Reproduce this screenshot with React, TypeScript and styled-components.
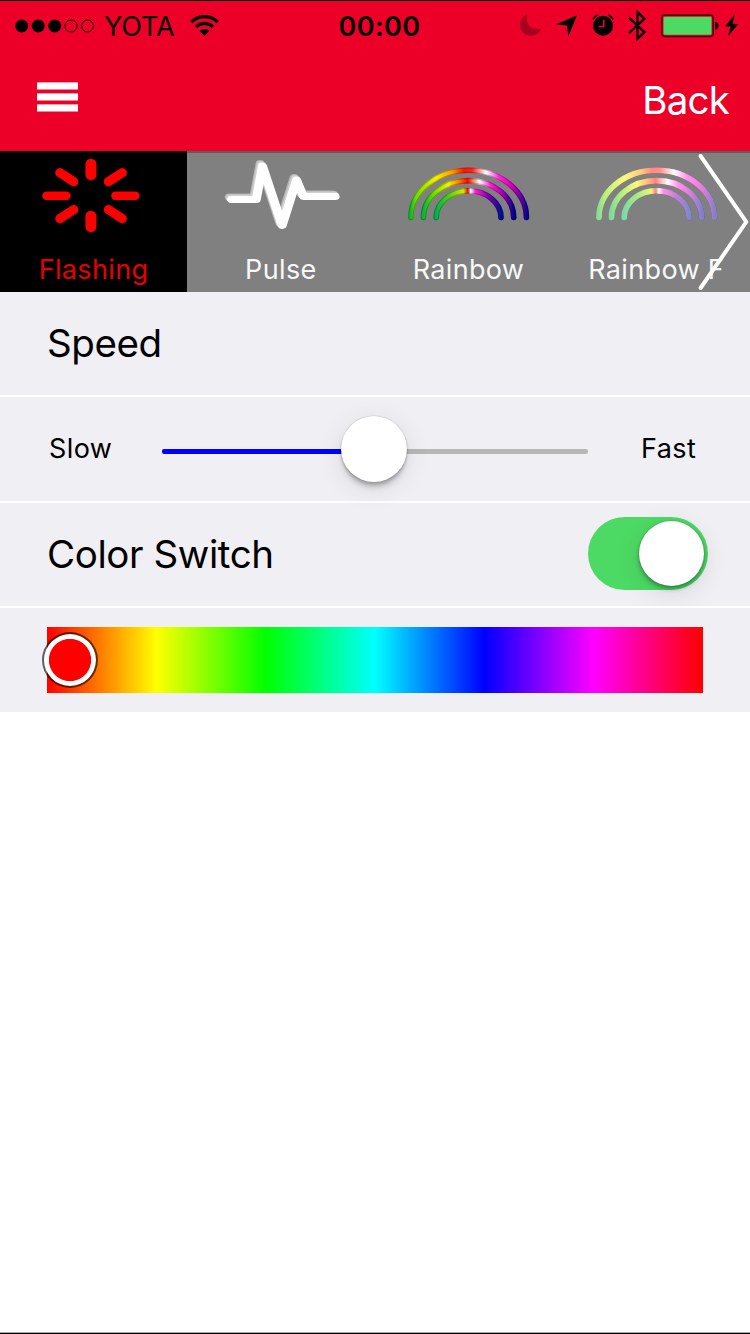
import React from "react";
import styled, { createGlobalStyle } from "styled-components";

const GlobalStyle = createGlobalStyle`
  * { box-sizing: border-box; }
  body { margin: 0; background: #fff; }
  svg { display: block; flex: none; }
`;

const Screen = styled.div`
  display: flex;
  flex-direction: column;
  width: 750px;
  height: 1334px;
  overflow: hidden;
  background: #fff;
  border-top: 1px solid #000;
  border-bottom: 1px solid #000;
  box-shadow: inset 0 -1px #aaa;
  font-family: Inter, "Liberation Sans", sans-serif;
`;

const Header = styled.header`
  height: 150px;
  flex: none;
  background: #ed0028;
`;

const StatusBar = styled.div`
  display: grid;
  grid-template-columns: 1fr auto 1fr;
  height: 49px;
  align-items: center;
`;

const StatusGroup = styled.div<{ $end?: boolean }>`
  display: flex;
  align-items: center;
  justify-content: ${(p) => (p.$end ? "flex-end" : "flex-start")};
  padding: ${(p) => (p.$end ? "0 11px 0 0" : "0 0 0 15px")};
`;

const Carrier = styled.span`
  font-size: 27px;
  line-height: 32px;
  margin: 2px 15px 0 9px;
  letter-spacing: -0.1px;
`;

const Clock = styled.span`
  font-size: 27px;
  line-height: 32px;
  font-weight: 600;
  letter-spacing: 0.4px;
  margin-top: 2px;
  margin-left: 9px;
`;

const NavBar = styled.nav`
  display: flex;
  justify-content: space-between;
  align-items: center;
  height: 100px;
  padding: 0 21px 0 37px;
`;

const MenuButton = styled.button`
  display: flex;
  flex-direction: column;
  gap: 3px;
  padding: 0;
  margin-bottom: 7px;
  border: 0;
  background: none;
`;

const MenuBar = styled.span`
  width: 41px;
  height: 8px;
  background: linear-gradient(#f9a0ac 0 1px, #fff 1px 7px, #f7808f 7px 8px);
`;

const BackButton = styled.button`
  padding: 0;
  border: 0;
  background: none;
  color: #fff;
  font: 400 38.5px/48px Inter, sans-serif;
  letter-spacing: -0.8px;
`;

const Tabs = styled.div`
  position: relative;
  display: grid;
  grid-template-columns: 187px repeat(3, 1fr);
  height: 141px;
  flex: none;
  background: #808080;
`;

const Tab = styled.div<{ $active?: boolean }>`
  display: flex;
  flex-direction: column;
  align-items: center;
  border-top: 2px solid ${(p) => (p.$active ? "#000" : "#5e5e5e")};
  background: ${(p) => (p.$active ? "#000" : "#808080")};
  color: ${(p) => (p.$active ? "#e60000" : "#f8f8f8")};
`;

const TabIcon = styled.div`
  height: 100px;
`;

const TabLabel = styled.span`
  font-size: 27px;
  line-height: 34px;
  letter-spacing: 0.35px;
  white-space: nowrap;
`;

const NextArrow = styled.div`
  position: absolute;
  top: 0;
  right: 0;
`;

const Row = styled.section<{ $tall?: boolean }>`
  display: flex;
  align-items: center;
  flex: none;
  height: ${(p) => (p.$tall ? 104 : 103)}px;
  background: #efeff4;
  padding: 0 47px 0 48px;
  & + & { margin-top: 2px; }
`;

const Title = styled.h2`
  flex: 1;
  margin: 0 0 2px -1px;
  font-weight: 400;
  font-size: 38.5px;
  line-height: 48px;
  letter-spacing: -0.4px;
  color: #000;
`;

const SliderLabel = styled.span<{ $end?: boolean }>`
  width: ${(p) => (p.$end ? 62 : 113)}px;
  padding-left: ${(p) => (p.$end ? 0 : 1)}px;
  font-size: 27px;
  line-height: 34px;
  letter-spacing: 0.4px;
`;

const SliderTrack = styled.div`
  position: relative;
  flex: none;
  width: 426px;
  height: 5px;
  margin: 5px 53px 0 1px;
  border-radius: 2px;
  background: linear-gradient(90deg, #0000ff 50%, #b7b7b7 50%);
`;

const SliderThumb = styled.div`
  position: absolute;
  left: 179px;
  top: -33px;
  width: 66px;
  height: 66px;
  border-radius: 50%;
  background: #fff;
  box-shadow: 0 0 1px 0.5px rgba(0, 0, 0, 0.14), 0 7px 5px -1px rgba(0, 0, 0, 0.13),
    0 3px 3px rgba(0, 0, 0, 0.16), 0 6px 26px rgba(0, 0, 0, 0.1);
`;

const Switch = styled.div`
  display: flex;
  align-items: center;
  justify-content: flex-end;
  width: 120px;
  height: 73px;
  padding: 0 4px 0 0;
  margin: 0 -5px 2px 0;
  border-radius: 37px;
  background: #4dda64;
`;

const SwitchThumb = styled.div`
  width: 65px;
  height: 65px;
  border-radius: 50%;
  background: #fff;
  box-shadow: 0 0 2px rgba(0, 0, 0, 0.25), 0 3px 4px rgba(0, 0, 0, 0.3),
    0 6px 24px rgba(0, 0, 0, 0.12);
`;

const HueBar = styled.div`
  position: relative;
  width: 656px;
  height: 66px;
  margin-left: -1px;
  background: linear-gradient(90deg, #f00, #ff0, #0f0, #0ff, #00f, #f0f, #f00);
`;

const HueThumb = styled.div`
  position: absolute;
  left: -5px;
  top: 5px;
  width: 56px;
  height: 56px;
  border-radius: 50%;
  border: 2px solid rgba(0, 0, 0, 0.6);
  background: radial-gradient(circle, #f00 20.7px, #fff 21.5px);
  background-clip: padding-box;
`;

function SignalDots() {
  return (
    <svg width="80" height="14" viewBox="0 0 80 14">
      <circle cx="6.7" cy="7" r="6.5" />
      <circle cx="23.2" cy="7" r="6.5" />
      <circle cx="39.7" cy="7" r="6.5" />
      <g fill="none" stroke="#000" strokeWidth="1">
        <circle cx="56" cy="7" r="6" />
        <circle cx="72.5" cy="7" r="6" />
      </g>
    </svg>
  );
}

function WifiIcon() {
  return (
    <svg width="29" height="22" viewBox="0 0.5 29 22">
      <g fill="none" stroke="#000" strokeWidth="3.4">
        <path d="M1.3 7.6 C8.5 .2 20.5 .2 27.7 7.6" />
        <path d="M6 12.4 C10.8 7.7 18.2 7.7 23 12.4" />
      </g>
      <path d="M14.5 21.3 L9.6 16.4 C12.3 13.9 16.7 13.9 19.4 16.4 Z" />
    </svg>
  );
}

function StatusIcons() {
  return (
    <svg width="219" height="34" viewBox="520 8.8 219 34">
      <path
        fill="#a8001c"
        d="M527.5 14.4 C524.5 23 531 31 541.3 28.6 C539.5 33 535.5 35.6 531 35.6 C525 35.6 520 31 520 25 C520 20 523 16 527.5 14.4 Z"
      />
      <path d="M577 15 L568.3 36.4 L567 25.3 L555.6 24.3 Z" />
      <circle cx="603" cy="25.5" r="10" />
      <path d="M592.8 19 A13 13 0 0 1 597.5 14.8 M608.5 14.8 A13 13 0 0 1 613.2 19" fill="none" stroke="#000" strokeWidth="1.8" />
      <path d="M603.8 19.5 V26.3 H598.5" fill="none" stroke="#ed0028" strokeWidth="1.6" />
      <path d="M629 17.5 L644.5 32 L637.5 38.5 V12 L644.5 18.5 L629 32.8" fill="none" stroke="#000" strokeWidth="2.3" />
      <rect x="661.8" y="14.8" width="51.4" height="21.4" rx="3" fill="none" stroke="#450009" strokeWidth="1.5" />
      <rect x="663.5" y="16.5" width="48" height="18" rx="1.3" fill="#4dda64" />
      <path d="M715 21.5 C719.7 22 719.7 29 715 29.5 Z" />
      <path d="M735 14 L725 26 L730.6 26.2 L728 36 L738.3 23.8 L732.4 23.5 Z" />
    </svg>
  );
}

function FlashingIcon() {
  return (
    <svg width="100" height="80" viewBox="43.9 153.3 100 80" overflow="visible" fill="none" stroke="#f00" strokeLinecap="round">
      <path strokeWidth="11" d="M90.8 164.5 V175 M90.8 216.5 V227" />
      <path strokeWidth="8.4" d="M46.3 196 H66.3 M115.3 196 H135.3" />
      <path strokeWidth="9.2" d="M59.7 173 L73.6 182 M122.2 173 L108.3 182 M59.7 218.9 L73.6 209.8 M122.2 218.9 L108.3 209.8" />
    </svg>
  );
}

const pulsePath = "M5 46 H23.5 L28.2 12.5 L43 72 L53.8 26.5 L59 43 H82.8";

function PulseIcon() {
  return (
    <svg width="120" height="80" viewBox="-4 -0.5 120 80" fill="none" strokeLinecap="round" strokeLinejoin="round">
      <g transform="scale(1.33 1)" strokeWidth="6.8">
        <path d={pulsePath} stroke="#b4b4b4" transform="translate(-1.8 -2.6)" />
        <path d={pulsePath} stroke="#d0d0d0" transform="translate(-1 -1.5)" />
        <path d={pulsePath} stroke="#fff" />
      </g>
    </svg>
  );
}

const arcs = [
  {
    d: "M3.5 64 A57.75 47.3 0 0 1 119 64",
    stops: [["0", "#16b42c"], [".05", "#70dd00"], [".22", "#f4f400"], [".36", "#ff9a00"], [".46", "#ff1400"], [".53", "#ff2020"], [".65", "#fff"], [".76", "#ff28d8"], [".86", "#e000b8"], [".96", "#5800a0"], ["1", "#080090"]],
  },
  {
    d: "M16 64 A45.15 36.9 0 0 1 106.3 64",
    stops: [["0", "#08b03c"], [".1", "#60d800"], [".28", "#f4f400"], [".4", "#ff7800"], [".49", "#ff0800"], [".62", "#fff"], [".74", "#ff20d0"], [".87", "#a800b0"], ["1", "#000090"]],
  },
  {
    d: "M28.8 64 A32.4 26.7 0 0 1 93.6 64",
    stops: [["0", "#00b050"], [".2", "#50d010"], [".42", "#d8e800"], [".49", "#e80800"], [".53", "#fff"], [".6", "#ff20d0"], [".8", "#7c00a8"], ["1", "#001090"]],
  },
];

function RainbowIcon({ id, pale }: { id: string; pale?: boolean }) {
  return (
    <svg width="122" height="80" viewBox="-0.4 -0.5 122 80" overflow="visible" fill="none" strokeLinecap="round">
      <defs>
        {arcs.map((arc, i) => (
          <linearGradient key={i} id={`${id}${i}`} gradientUnits="userSpaceOnUse" x1={3 + i * 12.6} x2={119.5 - i * 12.6} y1="0" y2="0">
            {arc.stops.map(([offset, color]) => (
              <stop key={offset} offset={offset} stopColor={color} />
            ))}
          </linearGradient>
        ))}
      </defs>
      {arcs.map((arc, i) => (
        <g key={i}>
          <path d={arc.d} stroke={`url(#${id}${i})`} strokeWidth="5.6" />
          <path d={arc.d} stroke={pale ? "#fff" : "#000"} strokeOpacity={pale ? 0.5 : 0.24} strokeWidth="5.6" />
          {!pale && <path d={arc.d} stroke={`url(#${id}${i})`} strokeWidth="3.4" />}
        </g>
      ))}
    </svg>
  );
}

export default function App() {
  return (
    <>
      <GlobalStyle />
      <Screen>
        <Header>
          <StatusBar>
            <StatusGroup>
              <SignalDots />
              <Carrier>YOTA</Carrier>
              <WifiIcon />
            </StatusGroup>
            <Clock>00:00</Clock>
            <StatusGroup $end>
              <StatusIcons />
            </StatusGroup>
          </StatusBar>
          <NavBar>
            <MenuButton aria-label="Menu">
              <MenuBar />
              <MenuBar />
              <MenuBar />
            </MenuButton>
            <BackButton>Back</BackButton>
          </NavBar>
        </Header>
        <Tabs>
          <Tab $active>
            <TabIcon><FlashingIcon /></TabIcon>
            <TabLabel>Flashing</TabLabel>
          </Tab>
          <Tab>
            <TabIcon><PulseIcon /></TabIcon>
            <TabLabel>Pulse</TabLabel>
          </Tab>
          <Tab>
            <TabIcon><RainbowIcon id="vivid" /></TabIcon>
            <TabLabel>Rainbow</TabLabel>
          </Tab>
          <Tab>
            <TabIcon><RainbowIcon id="pale" pale /></TabIcon>
            <TabLabel>Rainbow F</TabLabel>
          </Tab>
          <NextArrow>
            <svg width="54" height="141" viewBox="696 151 54 141">
              <path d="M700.6 156 L746.3 221.8 L700.6 288" fill="none" stroke="#fff" strokeWidth="4" strokeLinecap="round" strokeLinejoin="round" />
            </svg>
          </NextArrow>
        </Tabs>
        <Row>
          <Title>Speed</Title>
        </Row>
        <Row $tall>
          <SliderLabel>Slow</SliderLabel>
          <SliderTrack>
            <SliderThumb />
          </SliderTrack>
          <SliderLabel $end>Fast</SliderLabel>
        </Row>
        <Row>
          <Title>Color Switch</Title>
          <Switch>
            <SwitchThumb />
          </Switch>
        </Row>
        <Row $tall>
          <HueBar>
            <HueThumb />
          </HueBar>
        </Row>
      </Screen>
    </>
  );
}
